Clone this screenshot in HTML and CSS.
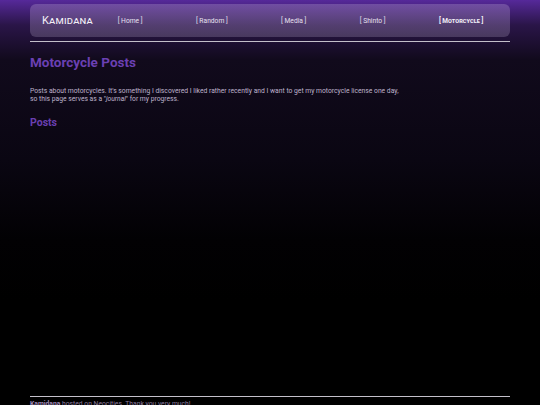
FILE: index.html
```html
<!DOCTYPE html>
<html>
<head>
<meta charset="utf-8">
<link rel="stylesheet" href="styles.css">
</head>
<body>
<div class="page">
  <header class="topbar">
    <div class="logo">Kamidana</div>
    <nav class="nav">
      <a class="nav-link">[ Home ]</a>
      <a class="nav-link">[ Random ]</a>
      <a class="nav-link">[ Media ]</a>
      <a class="nav-link">[ Shinto ]</a>
      <a class="nav-link current">[ Motorcycle ]</a>
    </nav>
  </header>
  <hr class="rule">
  <main class="main">
    <h1 class="title">Motorcycle Posts</h1>
    <p class="intro">Posts about motorcycles. It's something I discovered I liked rather recently and I want to get my motorcycle license one day,<br>so this page serves as a "<em>journal</em>" for my progress.</p>
    <h2 class="subtitle">Posts</h2>
  </main>
  <hr class="rule">
  <footer class="footer"><strong>Kamidana</strong> hosted on Neocities. Thank you very much!</footer>
</div>
</body>
</html>
```
FILE: styles.css
```css
html, body {
  margin: 0;
  padding: 0;
  height: 100%;
}
body {
  background: linear-gradient(180deg, #56299a 0px, #2a1548 25px, #110a1c 60px, #0a0612 160px, #020103 240px, #000 300px);
  background-color: #000;
  font-family: Roboto, "Liberation Sans", sans-serif;
  color: #bfb3cc;
  overflow: hidden;
}
.page {
  width: 480px;
  margin: 0 auto;
  padding-top: 4px;
}
.topbar {
  display: flex;
  align-items: center;
  height: 33px;
  padding-left: 12px;
  border-radius: 6px;
  background: linear-gradient(180deg, rgba(140, 110, 180, 0.55), rgba(110, 95, 130, 0.5));
  box-sizing: border-box;
}
.logo {
  font-variant: small-caps;
  font-size: 11px;
  color: #f3f0f7;
  letter-spacing: 0.2px;
  width: 49px;
}
.nav {
  flex: 1;
  display: flex;
  justify-content: space-around;
  align-items: center;
}
.nav-link {
  font-size: 6.7px;
  color: #e6e0ee;
}
.nav-link.current {
  font-variant: small-caps;
  font-weight: bold;
  font-size: 6.5px;
  color: #f2eef7;
}
.rule {
  border: 0;
  border-top: 1px solid #c4c0ca;
  margin: 4px 0 0;
  height: 0;
}
.main {
  height: 350px;
  padding-top: 12px;
  box-sizing: border-box;
}
.title {
  margin: 0;
  font-size: 13.5px;
  font-weight: bold;
  color: #6b40b3;
}
.intro {
  margin: 17px 0 0;
  font-size: 6.75px;
  line-height: 8px;
}
.intro em {
  font-style: italic;
}
.subtitle {
  margin: 13px 0 0;
  font-size: 10.5px;
  font-weight: bold;
  color: #6a3fb0;
}
.footer {
  margin-top: 3px;
  font-size: 6.75px;
  line-height: 8px;
  color: #8a7a9e;
}
.footer strong {
  color: #a08ab8;
}
```
